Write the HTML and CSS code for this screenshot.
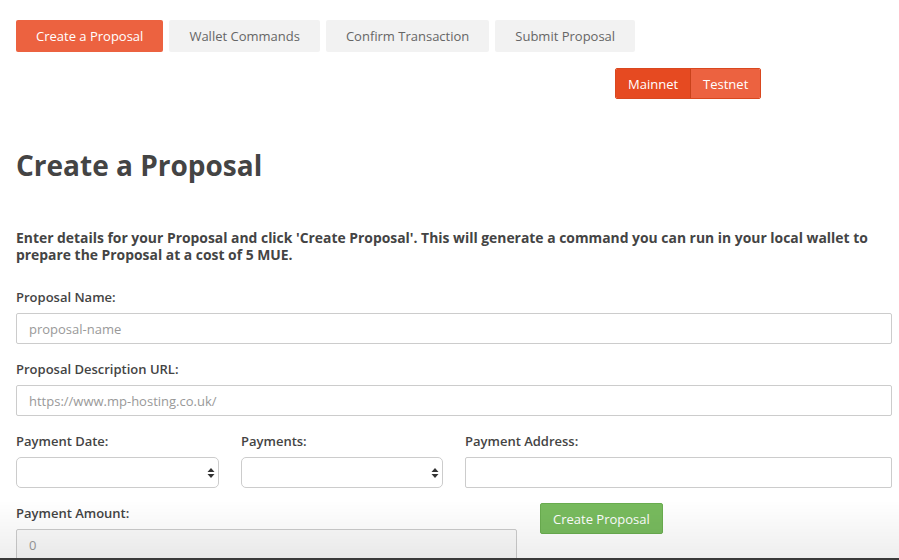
FILE: index.html
```html
<!DOCTYPE html>
<html lang="en">
<head>
<meta charset="utf-8">
<title>Create a Proposal</title>
<link rel="stylesheet" href="styles.css">
</head>
<body>
<div class="page">
  <nav class="tabs">
    <a class="tab active">Create a Proposal</a>
    <a class="tab">Wallet Commands</a>
    <a class="tab">Confirm Transaction</a>
    <a class="tab">Submit Proposal</a>
  </nav>
  <div class="network">
    <div class="toggle">
      <span class="net on">Mainnet</span>
      <span class="net">Testnet</span>
    </div>
  </div>
  <h1 class="title">Create a Proposal</h1>
  <p class="intro">Enter details for your Proposal and click 'Create Proposal'. This will generate a command you can run in your local wallet to prepare the Proposal at a cost of 5 MUE.</p>

  <div class="field">
    <label class="label">Proposal Name:</label>
    <input class="input" type="text" placeholder="proposal-name">
  </div>
  <div class="field">
    <label class="label">Proposal Description URL:</label>
    <input class="input" type="text" placeholder="https://www.mp-hosting.co.uk/">
  </div>
  <div class="row3">
    <div class="field">
      <label class="label">Payment Date:</label>
      <div class="select-wrap">
        <select class="select"><option></option></select>
        <svg class="caret" width="8" height="12" viewBox="0 0 8 12"><path d="M4 1 L7.5 5 H0.5 Z M4 11 L7.5 7 H0.5 Z" fill="#333"/></svg>
      </div>
    </div>
    <div class="field">
      <label class="label">Payments:</label>
      <div class="select-wrap">
        <select class="select"><option></option></select>
        <svg class="caret" width="8" height="12" viewBox="0 0 8 12"><path d="M4 1 L7.5 5 H0.5 Z M4 11 L7.5 7 H0.5 Z" fill="#333"/></svg>
      </div>
    </div>
    <div class="field wide">
      <label class="label">Payment Address:</label>
      <input class="input" type="text">
    </div>
  </div>
  <div class="row2">
    <div class="field">
      <label class="label">Payment Amount:</label>
      <input class="input readonly" type="text" placeholder="0">
    </div>
    <div class="action">
      <button class="btn-create">Create Proposal</button>
    </div>
  </div>
</div>
<div class="fade"></div>
</body>
</html>
```

FILE: styles.css
```css
* { box-sizing: border-box; }
html, body { margin: 0; padding: 0; background: #fff; }
body {
  font-family: "Open Sans", "Liberation Sans", sans-serif;
  font-size: 13px;
  color: #444;
  overflow: hidden;
  height: 560px;
}
.page { padding: 20px 7px 0 16px; }

.tabs { display: flex; gap: 6px; }
.tab {
  display: flex;
  align-items: center;
  height: 32px;
  padding: 0 20px;
  background: #f2f2f2;
  color: #666;
  border-radius: 2px;
  font-size: 13px;
}
.tab.active { background: #ec6240; color: #fff; }

.network { display: flex; margin-top: 16px; padding-left: 599px; }
.toggle { display: flex; border: 1px solid #d9481f; border-radius: 2px; overflow: hidden; }
.net {
  display: flex;
  align-items: center;
  height: 29px;
  padding: 0 12px 0 12px;
  background: #ec6240;
  color: #fff;
  font-size: 13px;
}
.net.on { background: #e64a21; border-right: 1px solid #c9421b; padding: 0 12px 0 12px; }

.title {
  margin: 51px 0 0;
  font-size: 28px;
  line-height: 31px;
  font-weight: 700;
  color: #444;
}
.intro {
  margin: 49px 0 0;
  font-size: 13.9px;
  line-height: 16.5px;
  font-weight: 700;
  color: #444;
  max-width: 870px;
}

.field { display: flex; flex-direction: column; margin-top: 25px; }
.field + .field { margin-top: 16px; }
.label { font-weight: 600; font-size: 13px; line-height: 18px; color: #444; margin-bottom: 7px; }
.input {
  height: 31px;
  width: 100%;
  border: 1px solid #ccc;
  border-radius: 2px;
  padding: 0 12px;
  font-family: "Open Sans", "Liberation Sans", sans-serif;
  font-size: 13px;
  color: #555;
  background: #fff;
  outline: none;
}
.input::placeholder { color: #999; }
.input.readonly { background: #fafafa; }

.row3 {
  display: grid;
  grid-template-columns: 203px 202px 1fr;
  column-gap: 22px;
  margin-top: 16px;
}
.row3 .field, .row2 .field { margin-top: 0; }
.select-wrap { position: relative; }
.select {
  appearance: none;
  -webkit-appearance: none;
  width: 100%;
  height: 31px;
  border: 1px solid #ccc;
  border-radius: 5px;
  background: #fff;
  font-family: "Open Sans", "Liberation Sans", sans-serif;
  font-size: 13px;
}
.caret { position: absolute; right: 4px; top: 10px; }

.row2 {
  display: grid;
  grid-template-columns: 501px auto;
  column-gap: 23px;
  justify-content: start;
  margin-top: 16px;
}
.btn-create {
  height: 31px;
  padding: 0 12px;
  margin-top: -1px;
  background: #78bb5e;
  border: 1px solid #6aad50;
  border-radius: 2px;
  color: #fff;
  font-family: "Open Sans", "Liberation Sans", sans-serif;
  font-size: 13px;
}

.fade {
  position: fixed;
  left: 0; right: 0; bottom: 0;
  height: 60px;
  background: linear-gradient(to bottom, rgba(0,0,0,0), rgba(0,0,0,0.065));
  border-bottom: 2px solid #3a3a3a;
  pointer-events: none;
}
```
